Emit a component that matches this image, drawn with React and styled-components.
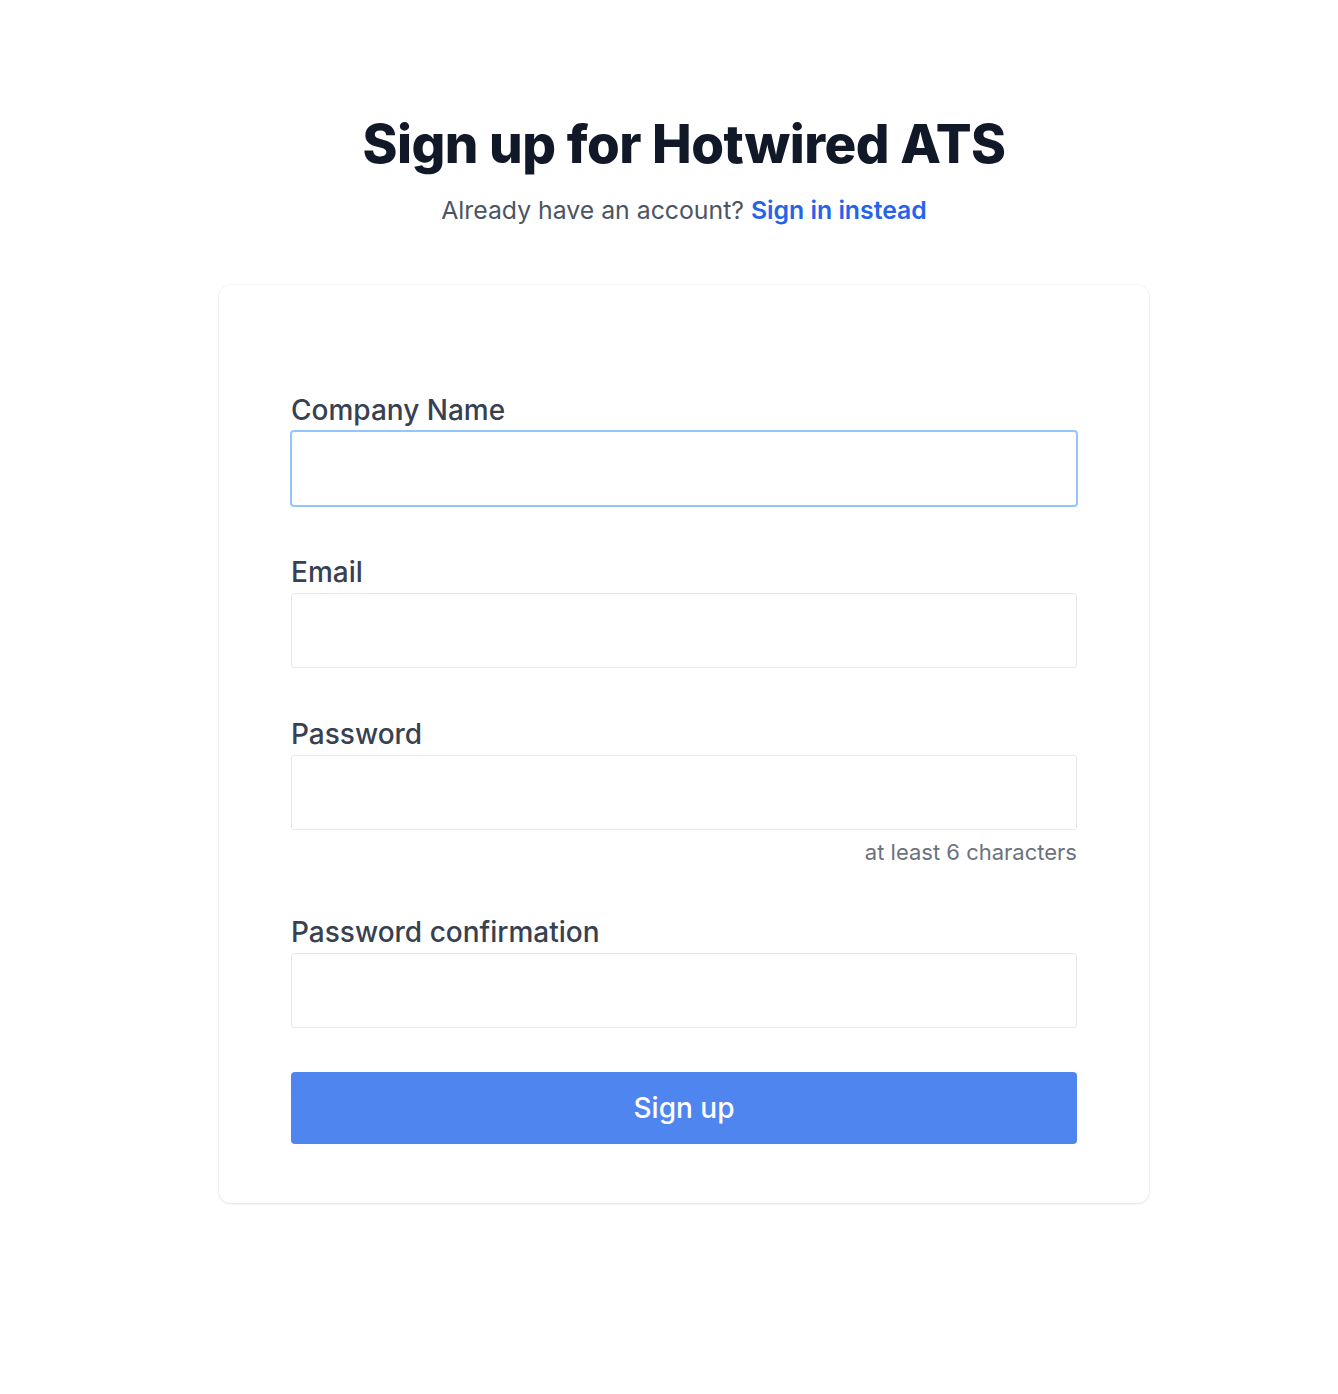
import styled, { createGlobalStyle } from 'styled-components';

const GlobalStyle = createGlobalStyle`
  body {
    margin: 0;
    background: #ffffff;
    font-family: Inter, "Noto Sans", sans-serif;
  }
`;

const Page = styled.div`
  display: flex;
  flex-direction: column;
  align-items: center;
  padding: 112px 0 120px 30px;
`;

const Title = styled.h1`
  margin: 0;
  font-size: 53px;
  line-height: 64px;
  font-weight: 800;
  color: #111827;
  letter-spacing: -0.5px;
`;

const Subtitle = styled.p`
  margin: 17px 0 0;
  font-size: 24.8px;
  line-height: 34px;
  color: #4b5563;
`;

const Link = styled.a`
  color: #2563eb;
  font-weight: 600;
  text-decoration: none;
`;

const Card = styled.div`
  margin-top: 58px;
  width: 930px;
  box-sizing: border-box;
  padding: 107px 72px 59px;
  background: #fff;
  border-radius: 12px;
  box-shadow: 0 1px 3px rgba(0, 0, 0, 0.1), 0 0 0 1px rgba(0, 0, 0, 0.02);
`;

const Form = styled.form`
  display: flex;
  flex-direction: column;
`;

const Field = styled.div`
  display: flex;
  flex-direction: column;
  margin-bottom: ${(p) => p.$gap || 48}px;
`;

const Label = styled.label`
  font-size: 28px;
  line-height: 36px;
  font-weight: 500;
  color: #374151;
  margin-bottom: 3px;
`;

const Input = styled.input`
  box-sizing: border-box;
  height: 75px;
  width: 100%;
  border: 1px solid ${(p) => (p.$focused ? '#93c5fd' : '#e5e7eb')};
  box-shadow: ${(p) => (p.$focused ? '0 0 0 1px #93c5fd' : 'none')};
  border-radius: 3px;
  font-size: 24px;
  padding: 0 16px;
  outline: none;
  font-family: inherit;
`;

const Hint = styled.p`
  margin: 8px 0 0;
  text-align: right;
  font-size: 22px;
  line-height: 28px;
  color: #6b7280;
`;

const Button = styled.button`
  height: 72px;
  width: 100%;
  border: none;
  border-radius: 4px;
  background: #4f85ee;
  color: #fff;
  font-family: inherit;
  font-size: 28px;
  font-weight: 500;
  cursor: pointer;
`;

export default function App() {
  return (
    <>
      <GlobalStyle />
      <Page>
        <Title>Sign up for Hotwired ATS</Title>
        <Subtitle>
          Already have an account? <Link href="#">Sign in instead</Link>
        </Subtitle>
        <Card>
          <Form onSubmit={(e) => e.preventDefault()}>
            <Field>
              <Label>Company Name</Label>
              <Input type="text" $focused />
            </Field>
            <Field>
              <Label>Email</Label>
              <Input type="email" />
            </Field>
            <Field $gap={48}>
              <Label>Password</Label>
              <Input type="password" />
              <Hint>at least 6 characters</Hint>
            </Field>
            <Field $gap={44}>
              <Label>Password confirmation</Label>
              <Input type="password" />
            </Field>
            <Button type="submit">Sign up</Button>
          </Form>
        </Card>
      </Page>
    </>
  );
}
